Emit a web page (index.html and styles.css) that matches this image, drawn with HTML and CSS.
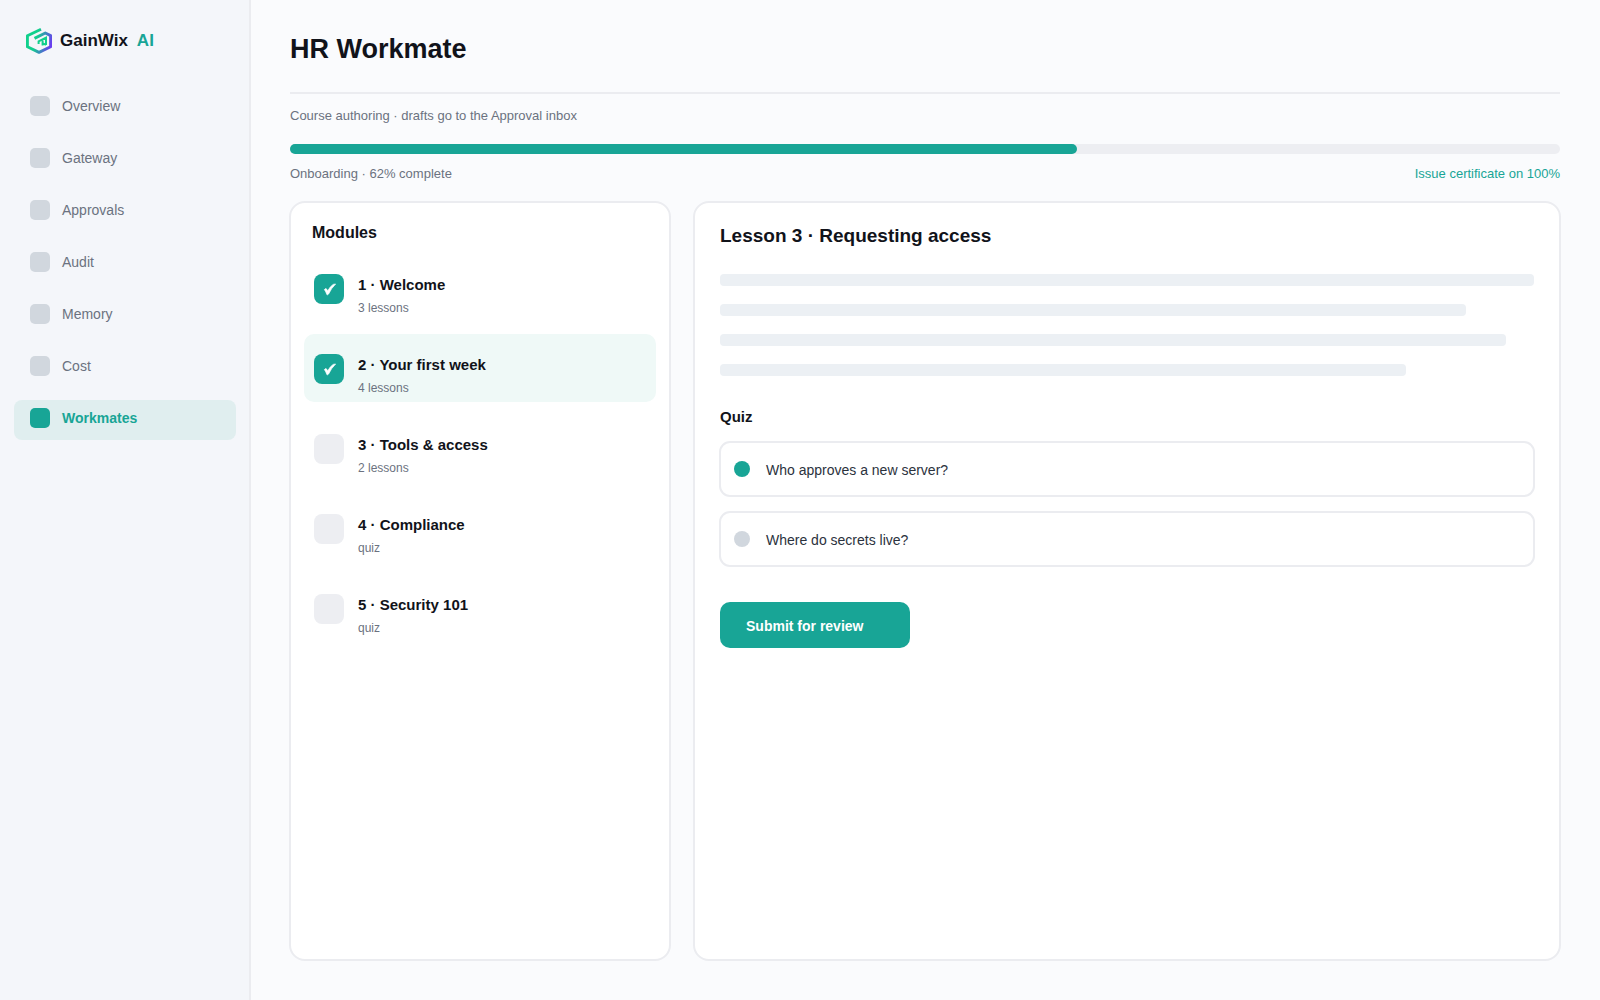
FILE: index.html
```html
<!DOCTYPE html>
<html lang="en">
	<head>
		<meta charset="utf-8">
		<title>GainWix AI - HR Workmate</title>
		<link rel="stylesheet" href="styles.css">
	</head>
	<body>
		<aside class="sidebar">
			<div class="brand">
				<svg class="logo" viewBox="0 0 26 26" width="26" height="26" aria-hidden="true">
					<defs>
						<linearGradient id="logo-fill" gradientUnits="userSpaceOnUse" x1="3" y1="10" x2="25" y2="17">
							<stop offset="0.3" stop-color="#10d08c" />
							<stop offset="1" stop-color="#6a3df0" />
						</linearGradient>
					</defs>
					<path d="M15 1.3 L1.4 7.8 V18.8 L13 24.4 L24.6 18.8 V7.6 L19.3 5 L8.5 10.4" fill="none" stroke="url(#logo-fill)" stroke-width="2.9" stroke-linejoin="round" />
					<path d="M12.6 16 V13.4 L20 9.6 V17 M16.6 17.4 V12.4 M20 16.8 L17 15.4" fill="none" stroke="#10d08c" stroke-width="2" />
				</svg>
				<span class="brand-name">GainWix</span>
				<span class="brand-ai">AI</span>
			</div>
			<nav class="nav">
				<a class="nav-item" href="#"><span class="nav-icon"></span>Overview</a>
				<a class="nav-item" href="#"><span class="nav-icon"></span>Gateway</a>
				<a class="nav-item" href="#"><span class="nav-icon"></span>Approvals</a>
				<a class="nav-item" href="#"><span class="nav-icon"></span>Audit</a>
				<a class="nav-item" href="#"><span class="nav-icon"></span>Memory</a>
				<a class="nav-item" href="#"><span class="nav-icon"></span>Cost</a>
				<a class="nav-item active" href="#"><span class="nav-icon"></span>Workmates</a>
			</nav>
		</aside>
		<main class="main">
			<h1>HR Workmate</h1>
			<p class="intro">Course authoring · drafts go to the Approval inbox</p>
			<div class="progress"><div class="progress-fill" style="width:62%"></div></div>
			<div class="progress-info">
				<span>Onboarding · 62% complete</span>
				<a href="#">Issue certificate on 100%</a>
			</div>
			<div class="panels">
				<section class="card modules">
					<h2>Modules</h2>
					<div class="module-list">
						<label class="module">
							<input class="tick" type="checkbox" checked>
							<span class="module-text"><b>1 · Welcome</b><small>3 lessons</small></span>
						</label>
						<label class="module current">
							<input class="tick" type="checkbox" checked>
							<span class="module-text"><b>2 · Your first week</b><small>4 lessons</small></span>
						</label>
						<label class="module">
							<input class="tick" type="checkbox">
							<span class="module-text"><b>3 · Tools &amp; access</b><small>2 lessons</small></span>
						</label>
						<label class="module">
							<input class="tick" type="checkbox">
							<span class="module-text"><b>4 · Compliance</b><small>quiz</small></span>
						</label>
						<label class="module">
							<input class="tick" type="checkbox">
							<span class="module-text"><b>5 · Security 101</b><small>quiz</small></span>
						</label>
					</div>
				</section>
				<section class="card lesson">
					<h2>Lesson 3 · Requesting access</h2>
					<div class="lines">
						<div class="line"></div>
						<div class="line line-2"></div>
						<div class="line line-3"></div>
						<div class="line line-4"></div>
					</div>
					<h3>Quiz</h3>
					<form class="quiz">
						<div class="options">
							<label class="option"><input class="dot" type="radio" name="question" checked><span>Who approves a new server?</span></label>
							<label class="option"><input class="dot" type="radio" name="question"><span>Where do secrets live?</span></label>
						</div>
						<button class="submit" type="button">Submit for review</button>
					</form>
				</section>
			</div>
		</main>
	</body>
</html>
```
FILE: styles.css
```css
* {
	box-sizing:border-box;
}
body {
	margin:0;
	display:flex;
	min-height:100vh;
	background:#fafbfd;
	color:#11131a;
	font-family:"Liberation Sans", Arial, Helvetica, sans-serif;
	font-size:14px;
	line-height:20px;
}
h1, h2, h3, p {
	margin:0;
}
a {
	text-decoration:none;
}

/* sidebar */
.sidebar {
	flex:none;
	width:251px;
	padding:28px 13px 28px 14px;
	background:#f4f6fa;
	border-right:2px solid #ebecf0;
}
.brand {
	display:flex;
	align-items:center;
	height:26px;
	padding-left:12px;
	font-size:17px;
	font-weight:bold;
}
.brand-name {
	margin-left:8px;
}
.brand-ai {
	margin-left:9px;
	color:#18a596;
}
.nav {
	display:flex;
	flex-direction:column;
	gap:12px;
	margin-top:34px;
}
.nav-item {
	display:flex;
	gap:12px;
	height:40px;
	padding:8px 16px;
	border-radius:8px;
	color:#6b7280;
}
.nav-icon {
	width:20px;
	height:20px;
	border-radius:5px;
	background:#d1d7de;
}
.nav-item.active {
	background:#e0eeef;
	color:#18a596;
	font-weight:bold;
}
.active .nav-icon {
	background:#18a596;
}

/* page */
.main {
	flex:1;
	min-width:0;
	display:flex;
	flex-direction:column;
	padding:32px 40px 39px 39px;
}
h1 {
	padding-bottom:26px;
	border-bottom:2px solid #ebecf0;
	font-size:27px;
	line-height:34px;
}
.intro {
	margin-top:12px;
	color:#6b7280;
	font-size:13px;
}
.progress {
	height:10px;
	margin-top:18px;
	border-radius:5px;
	background:#edeef2;
}
.progress-fill {
	height:100%;
	border-radius:5px;
	background:#18a596;
}
.progress-info {
	display:flex;
	justify-content:space-between;
	margin-top:10px;
	color:#6b7280;
	font-size:13px;
}
.progress-info a {
	color:#18a596;
}
.panels {
	flex:1;
	display:grid;
	grid-template-columns:minmax(0, 382fr) minmax(0, 868fr);
	gap:22px;
	margin:17px -1px 0;
}
.card {
	border:2px solid #ebecf0;
	border-radius:16px;
	background:#fff;
}

/* modules */
.modules {
	padding:20px 13px;
}
.modules h2 {
	padding-left:8px;
	font-size:16px;
}
.module-list {
	display:flex;
	flex-direction:column;
	gap:12px;
	margin-top:11px;
}
.module {
	display:flex;
	gap:14px;
	padding:20px 10px 6px;
	border-radius:10px;
}
.module.current {
	background:#eff9f7;
}
.module-text b,
.module-text small {
	display:block;
}
.module-text b {
	font-size:15px;
	line-height:22px;
}
.module-text small {
	margin-top:4px;
	color:#6b7280;
	font-size:12px;
	line-height:16px;
}
.tick {
	appearance:none;
	flex:none;
	width:30px;
	height:30px;
	margin:0;
	border-radius:8px;
	background:#edeef2;
}
.tick:checked {
	background:#18a596 url("data:image/svg+xml,%3Csvg xmlns='http://www.w3.org/2000/svg' viewBox='0 0 30 30'%3E%3Cpath d='M10.4 15.6 Q11.8 14 12.6 15 L13.6 17 Q16.4 12 19.2 10.4 L21.6 10 Q17.4 14 14.6 20 Q13.8 21 13 20.8 Q11.8 17.6 10.4 15.6 Z' fill='white' stroke='white' stroke-width='.7' stroke-linejoin='round'/%3E%3C/svg%3E") center / 30px 30px no-repeat;
}

/* lesson */
.lesson {
	padding:21px 25px;
}
.lesson h2 {
	font-size:19px;
	line-height:24px;
}
.lines {
	display:flex;
	flex-direction:column;
	gap:18px;
	margin-top:26px;
}
.line {
	height:12px;
	border-radius:4px;
	background:#ecf0f4;
}
.line-2 {
	width:91.7%;
}
.line-3 {
	width:96.6%;
}
.line-4 {
	width:84.3%;
}
.lesson h3 {
	margin-top:31px;
	font-size:15px;
}
.options {
	display:flex;
	flex-direction:column;
	gap:14px;
	margin:14px -1px 0;
}
.option {
	display:flex;
	align-items:center;
	gap:16px;
	height:56px;
	padding:0 13px;
	border:2px solid #ebecf0;
	border-radius:11px;
	color:#2b323d;
	line-height:22px;
}
.option span {
	padding-top:2px;
}
.dot {
	appearance:none;
	width:16px;
	height:16px;
	margin:0;
	border-radius:50%;
	background:#d1d7de;
}
.dot:checked {
	background:#18a596;
}
.submit {
	height:46px;
	margin-top:35px;
	padding:2px 47px 0 26px;
	border:0;
	border-radius:10px;
	background:#18a596;
	color:#fff;
	font:bold 14px "Liberation Sans", Arial, sans-serif;
}
```
